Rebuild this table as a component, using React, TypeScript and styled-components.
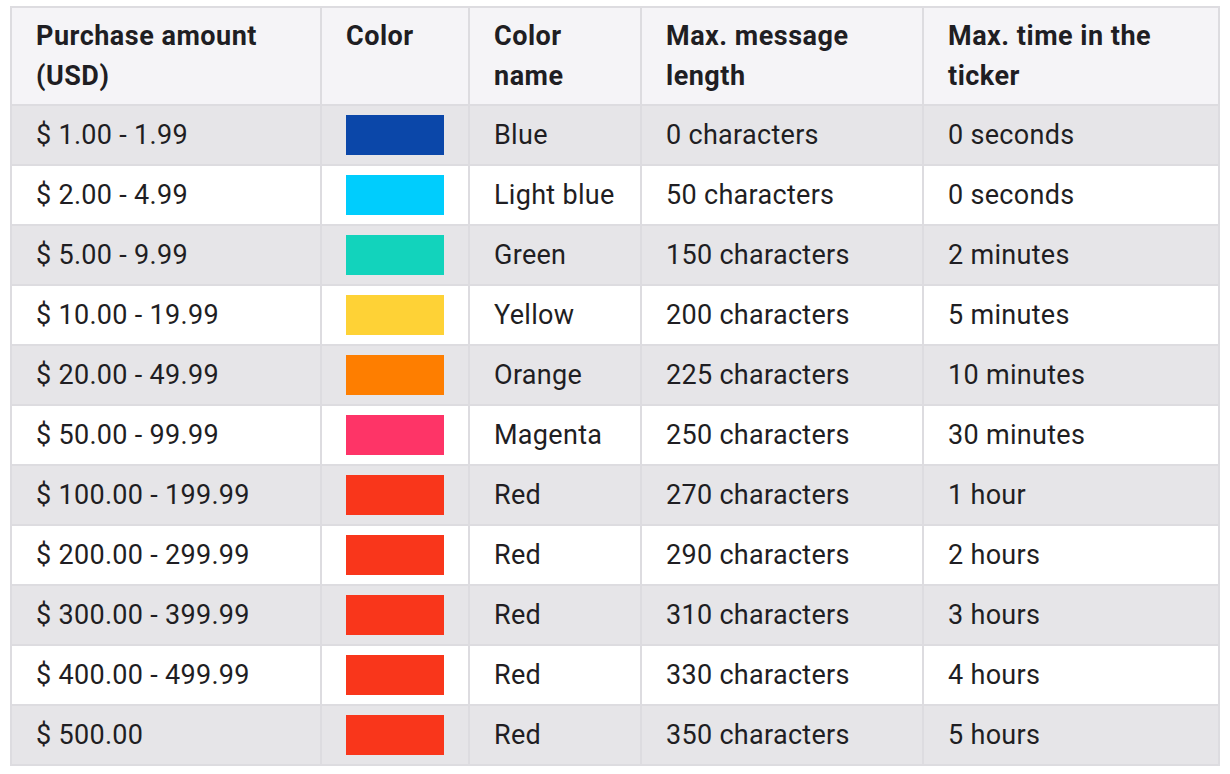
import styled, { createGlobalStyle } from 'styled-components';

interface Tier {
  amount: string;
  color: string;
  name: string;
  length: string;
  time: string;
}

const tiers: Tier[] = [
  { amount: '$ 1.00 - 1.99', color: '#0b47a9', name: 'Blue', length: '0 characters', time: '0 seconds' },
  { amount: '$ 2.00 - 4.99', color: '#00cdfd', name: 'Light blue', length: '50 characters', time: '0 seconds' },
  { amount: '$ 5.00 - 9.99', color: '#12d3bc', name: 'Green', length: '150 characters', time: '2 minutes' },
  { amount: '$ 10.00 - 19.99', color: '#fed236', name: 'Yellow', length: '200 characters', time: '5 minutes' },
  { amount: '$ 20.00 - 49.99', color: '#fe7e00', name: 'Orange', length: '225 characters', time: '10 minutes' },
  { amount: '$ 50.00 - 99.99', color: '#fe3467', name: 'Magenta', length: '250 characters', time: '30 minutes' },
  { amount: '$ 100.00 - 199.99', color: '#f9361b', name: 'Red', length: '270 characters', time: '1 hour' },
  { amount: '$ 200.00 - 299.99', color: '#f9361b', name: 'Red', length: '290 characters', time: '2 hours' },
  { amount: '$ 300.00 - 399.99', color: '#f9361b', name: 'Red', length: '310 characters', time: '3 hours' },
  { amount: '$ 400.00 - 499.99', color: '#f9361b', name: 'Red', length: '330 characters', time: '4 hours' },
  { amount: '$ 500.00', color: '#f9361b', name: 'Red', length: '350 characters', time: '5 hours' },
];

export default function App() {
  return (
    <>
      <GlobalStyle />
      <Table>
        <colgroup>
          <col style={{ width: 310 }} />
          <col style={{ width: 148 }} />
          <col style={{ width: 172 }} />
          <col style={{ width: 282 }} />
          <col style={{ width: 296 }} />
        </colgroup>
        <thead>
          <tr>
            <Th>
              Purchase amount
              <br />
              (USD)
            </Th>
            <Th>Color</Th>
            <Th>
              Color
              <br />
              name
            </Th>
            <Th>
              Max. message
              <br />
              length
            </Th>
            <Th>
              Max. time in the
              <br />
              ticker
            </Th>
          </tr>
        </thead>
        <tbody>
          {tiers.map((t, i) => (
            <Row key={i} $striped={i % 2 === 0}>
              <Td>{t.amount}</Td>
              <Td>
                <Swatch $color={t.color} />
              </Td>
              <Td>{t.name}</Td>
              <Td>{t.length}</Td>
              <Td>{t.time}</Td>
            </Row>
          ))}
        </tbody>
      </Table>
    </>
  );
}

const GlobalStyle = createGlobalStyle`
  body {
    margin: 0;
    background: #fff;
    font-family: Roboto, "Liberation Sans", sans-serif;
    color: #1f1e23;
  }
`;

const Table = styled.table`
  margin: 6px 0 0 10px;
  width: 1209px;
  border-collapse: collapse;
  table-layout: fixed;
  border: 2px solid #dddce0;
  font-size: 27px;
  line-height: 40px;
  letter-spacing: 0.3px;
`;

const Th = styled.th`
  padding: 8px 24px;
  text-align: left;
  vertical-align: top;
  font-weight: 700;
  letter-spacing: 0.5px;
  background: #f5f4f7;
  border: 2px solid #dddce0;
`;

const Row = styled.tr<{ $striped: boolean }>`
  background: ${(p) => (p.$striped ? '#e6e5e8' : '#ffffff')};
`;

const Td = styled.td`
  padding: 9px 24px;
  vertical-align: middle;
  white-space: nowrap;
  border: 2px solid #dddce0;
`;

const Swatch = styled.div<{ $color: string }>`
  width: 98px;
  height: 40px;
  background: ${(p) => p.$color};
`;
